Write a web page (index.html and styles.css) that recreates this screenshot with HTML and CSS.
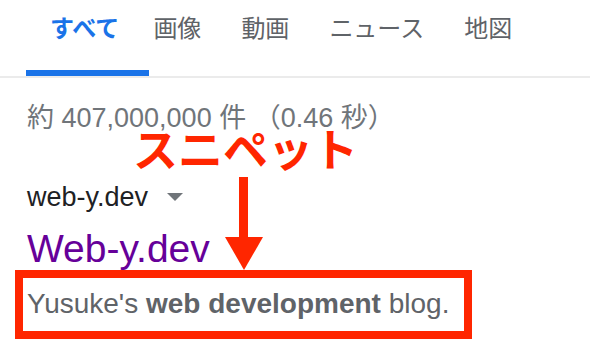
FILE: index.html
```html
<!doctype html>
<html lang="ja">
    <head>
        <meta charset="utf-8">
        <title>web-y.dev - 検索</title>
        <link rel="stylesheet" href="styles.css">
    </head>
    <body>
        <div class="page">
            <!-- search tabs -->
            <div class="tabs">
                <div class="tab tab-active">すべて</div>
                <div class="tab">画像</div>
                <div class="tab">動画</div>
                <div class="tab">ニュース</div>
                <div class="tab">地図</div>
            </div>

            <div class="results">
                <div class="stats">約 407,000,000 件 （0.46 秒）</div>
                <div class="note">スニペット</div>
                <div class="site">web-y.dev<span class="site-menu"></span></div>
                <div class="title">Web-y.dev</div>
                <div class="snippet">Yusuke's <b>web development</b> blog.</div>
            </div>

            <!-- annotation arrow -->
            <svg class="arrow" width="38" height="93" viewBox="0 0 38 93">
                <rect x="14" y="0" width="9" height="62" fill="#ff2600" />
                <polygon points="0,60 38,60 19,93" fill="#ff2600" />
            </svg>
        </div>
    </body>
</html>
```

FILE: styles.css
```css
body {
    margin : 0;
    font-family : "Liberation Sans", "Noto Sans CJK JP", Arial, sans-serif;
    background : #fff;
}

.page {
    position : relative;
    width : 590px;
    height : 348px;
    overflow : hidden;
}

.tabs {
    display : flex;
    padding-left : 26px;
    border-bottom : 2px solid #ebebeb;
}

.tab {
    font-size : 24px;
    line-height : 34px;
    color : #5f6368;
    padding : 12px 20px 24px;
    border-bottom : 6px solid transparent;
    white-space : nowrap;
}

.tab-active {
    color : #1a73e8;
    font-weight : bold;
    padding : 12px 30px 24px 24px;
    margin-right : -16px;
    border-bottom-color : #1a73e8;
}

.results {
    padding : 27px 15px 0;
}

.stats {
    margin-left : 12px;
    font-size : 27px;
    line-height : 26px;
    color : #70757a;
    white-space : nowrap;
}

.note {
    margin-left : 118px;
    font-family : "Noto Sans CJK JP", sans-serif;
    font-size : 45px;
    font-weight : bold;
    line-height : 34px;
    color : #ff2600;
}

.site {
    margin : 17px 0 0 12px;
    font-size : 27px;
    line-height : 30px;
    color : #202124;
}

.site-menu {
    display : inline-block;
    margin-left : 19px;
    vertical-align : 5px;
    border-left : 8.5px solid transparent;
    border-right : 8.5px solid transparent;
    border-top : 8px solid #70757a;
}

.title {
    margin : 16px 0 0 12px;
    font-size : 39px;
    line-height : 42px;
    color : #660099;
}

.snippet {
    width : 437px;
    padding : 0 0 2px 4px;
    border : 8px solid #ff2600;
    font-size : 28px;
    line-height : 51px;
    color : #5f6368;
    white-space : nowrap;
}

.snippet b {
    color : #5f6368;
}

.arrow {
    position : absolute;
    left : 225px;
    top : 177px;
}
```
